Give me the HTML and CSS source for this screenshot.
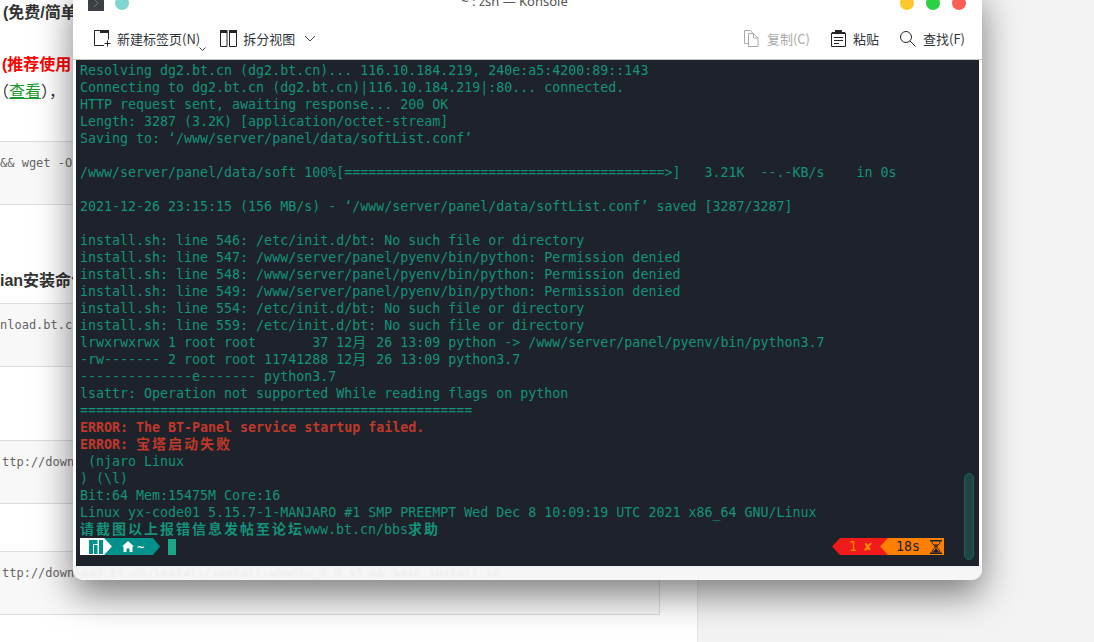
FILE: index.html
```html
<!DOCTYPE html>
<html lang="zh">
<head>
<meta charset="utf-8">
<title>Konsole</title>
<link rel="stylesheet" href="styles.css">
</head>
<body>
<div class="page">
  <main class="article">
    <p class="lead">(免费/简单的安装)</p>
    <p class="recommend">(推荐使用</p>
    <p class="note">（<a class="link" href="#">查看</a>），</p>
    <div class="code code-first">&amp;&amp; wget -O install.sh</div>
    <h3 class="heading">ian安装命令</h3>
    <div class="code code-second">nload.bt.cn/install/install-ubuntu_6.0.sh</div>
    <div class="code code-third">ttp://download.bt.cn/install/install_6.0.sh</div>
    <div class="code code-fourth">ttp://download.bt.cn/install/install-ubuntu_6.0.sh &amp;&amp; bash install.sh</div>
  </main>
  <aside class="sidebar"></aside>
</div>

<section class="window">
  <header class="titlebar">
    <div class="title-left">
      <span class="menu-btn">
        <svg class="menu-chevron" width="6" height="10" viewBox="0 0 6 10"><path d="M1 1l4 4-4 4" fill="none" stroke="#777" stroke-width="1"/></svg>
      </span>
      <span class="dot dot-teal"></span>
    </div>
    <div class="title">~ : zsh — Konsole</div>
    <div class="title-right">
      <span class="dot dot-yellow"></span>
      <span class="dot dot-green"></span>
      <span class="dot dot-red"></span>
    </div>
  </header>

  <nav class="toolbar">
    <div class="tool tool-new">
      <svg class="icon" width="17" height="17" viewBox="0 0 17 17"><path d="M10 15.500H.5V.5h14v9" fill="none" stroke="#232629"/><path d="M6 0h9v3H6z" fill="#232629"/><path d="M10.500 13.500h6M13.500 10.500v6" stroke="#232629" fill="none"/></svg>
      <span>新建标签页(N)</span>
      <svg class="mini-chevron" width="7" height="4" viewBox="0 0 7 4"><path d="M.5.5l3 3 3-3" fill="none" stroke="#444"/></svg>
    </div>
    <div class="tool tool-split">
      <svg class="icon" width="17" height="17" viewBox="0 0 17 17"><path d="M.5 2.500h6.500v14H.5zM9.500 2.500h7v14h-7z" fill="none" stroke="#232629"/><path d="M0 0h7.500v3H0zM9 0h8v3H9z" fill="#232629"/></svg>
      <span>拆分视图</span>
      <svg class="chevron" width="12" height="7" viewBox="0 0 12 7"><path d="M1 1l5 5 5-5" fill="none" stroke="#444"/></svg>
    </div>
    <div class="tool tool-copy">
      <svg class="icon" width="15" height="17" viewBox="0 0 15 17"><path d="M5 13.500H.5V.5h6l2.500 3" fill="none" stroke="#aaa"/><path d="M4.500 3.500h5l4.500 4.500v8.500H4.500z" fill="none" stroke="#aaa"/><path d="M9.500 3.500v4.500h4.500" fill="none" stroke="#aaa"/></svg>
      <span>复制(C)</span>
    </div>
    <div class="tool tool-paste">
      <svg class="icon" width="15" height="17" viewBox="0 0 15 17"><path d="M.5 3h14v13.500H.5z" fill="none" stroke="#232629"/><path d="M1 2h13v2H1zM4 0h7v3H4z" fill="#232629"/><path d="M3 7.500h9M3 10.500h9M3 13.500h5" stroke="#232629" fill="none"/></svg>
      <span>粘贴</span>
    </div>
    <div class="tool tool-find">
      <svg class="icon" width="16" height="16" viewBox="0 0 16 16"><circle cx="6" cy="6" r="5.500" fill="none" stroke="#232629"/><path d="M10 10l5.500 5.500" stroke="#232629" fill="none"/></svg>
      <span>查找(F)</span>
    </div>
  </nav>

  <div class="terminal">
    <div class="line">Resolving dg2.bt.cn (dg2.bt.cn)... 116.10.184.219, 240e:a5:4200:89::143</div>
    <div class="line">Connecting to dg2.bt.cn (dg2.bt.cn)|116.10.184.219|:80... connected.</div>
    <div class="line">HTTP request sent, awaiting response... 200 OK</div>
    <div class="line">Length: 3287 (3.2K) [application/octet-stream]</div>
    <div class="line">Saving to: ‘/www/server/panel/data/softList.conf’</div>
    <div class="line"></div>
    <div class="line">/www/server/panel/data/soft 100%[========================================&gt;]   3.21K  --.-KB/s    in 0s</div>
    <div class="line"></div>
    <div class="line">2021-12-26 23:15:15 (156 MB/s) - ‘/www/server/panel/data/softList.conf’ saved [3287/3287]</div>
    <div class="line"></div>
    <div class="line">install.sh: line 546: /etc/init.d/bt: No such file or directory</div>
    <div class="line">install.sh: line 547: /www/server/panel/pyenv/bin/python: Permission denied</div>
    <div class="line">install.sh: line 548: /www/server/panel/pyenv/bin/python: Permission denied</div>
    <div class="line">install.sh: line 549: /www/server/panel/pyenv/bin/python: Permission denied</div>
    <div class="line">install.sh: line 554: /etc/init.d/bt: No such file or directory</div>
    <div class="line">install.sh: line 559: /etc/init.d/bt: No such file or directory</div>
    <div class="line">lrwxrwxrwx 1 root root       37 12<span class="cjk">月</span> 26 13:09 python -&gt; /www/server/panel/pyenv/bin/python3.7</div>
    <div class="line">-rw------- 2 root root 11741288 12<span class="cjk">月</span> 26 13:09 python3.7</div>
    <div class="line">--------------e------- python3.7</div>
    <div class="line">lsattr: Operation not supported While reading flags on python</div>
    <div class="line">=================================================</div>
    <div class="line line-error">ERROR: The BT-Panel service startup failed.</div>
    <div class="line line-error">ERROR: <span class="cjk cjk-bold">宝塔启动失败</span></div>
    <div class="line"> (njaro Linux</div>
    <div class="line">) (\l)</div>
    <div class="line">Bit:64 Mem:15475M Core:16</div>
    <div class="line">Linux yx-code01 5.15.7-1-MANJARO #1 SMP PREEMPT Wed Dec 8 10:09:19 UTC 2021 x86_64 GNU/Linux</div>
    <div class="line"><span class="cjk cjk-bold">请截图以上报错信息发帖至论坛</span>www.bt.cn/bbs<span class="cjk cjk-bold">求助</span></div>
    <div class="prompt">
      <div class="seg-logo">
        <svg width="14" height="14" viewBox="0 0 14 14"><path d="M0 0h8.500v4H4v10H0zM5 5h3.500v9H5zM10 0h4v14h-4z" fill="#00918a"/></svg>
      </div>
      <div class="seg-home">
        <svg width="12" height="11" viewBox="0 0 12 11"><path d="M6 0l6 5.500h-1.500V11H7.500V7.500h-3V11H1.500V5.500H0z" fill="#fff"/></svg>
        <span class="tilde">~</span>
      </div>
      <span class="cursor"></span>
      <div class="status">
        <div class="seg-error"><span>1</span><span class="cross">✘</span></div>
        <div class="seg-time">
          <span>18s</span>
          <svg class="hourglass" width="12" height="14" viewBox="0 0 12 14"><path d="M0 0h12v1.500H0zM0 12.500h12V14H0z" fill="#1e222a"/><path d="M2 1.500C2 5 5 5.500 5.500 7 5 8.500 2 9 2 12.500M10 1.500C10 5 7 5.500 6.500 7 7 8.500 10 9 10 12.500" fill="none" stroke="#1e222a"/><path d="M3.500 4.500h5L6 7zM6 8l3.500 4.500h-7z" fill="#1e222a"/></svg>
        </div>
      </div>
    </div>
    <div class="scrollbar"></div>
  </div>
  <div class="window-foot"></div>
</section>
</body>
</html>
```

FILE: styles.css
```css
html, body {
  margin: 0;
  padding: 0;
  height: 100%;
  overflow: hidden;
  background: #fff;
}

.page {
  display: flex;
  height: 642px;
  font-family: "Liberation Sans", "Noto Sans CJK SC", sans-serif;
  color: #333;
}

.article {
  width: 697px;
  flex: none;
  background: #fff;
  border-right: 1px solid #e6e6e6;
  overflow: hidden;
}

.sidebar {
  flex: 1;
  background: #f3f3f3;
}

.lead, .recommend, .heading {
  margin: 0;
  font-size: 16px;
  font-weight: 700;
  white-space: nowrap;
  line-height: 22px;
}

.lead { padding: 2px 0 0 3px; }
.recommend { margin-top: 30px; padding-left: 2px; color: #f00; }

.note {
  margin: 3px 0 0 -7px;
  font-size: 16px;
  line-height: 22px;
  font-family: "Noto Sans CJK SC", sans-serif;
  white-space: nowrap;
}

.link { color: #1a9a2e; }

.code {
  box-sizing: border-box;
  width: 660px;
  height: 64px;
  padding: 13px 0 0 2px;
  background: #f8f8f8;
  border: 1px solid #ddd;
  border-left: 0;
  font-family: "DejaVu Sans Mono", monospace;
  font-size: 12px;
  line-height: 16px;
  color: #666;
  white-space: nowrap;
}

.code-first { margin-top: 40px; padding-left: 0; }
.heading { margin-top: 65px; }
.code-second { margin-top: 11px; padding-left: 0; }
.code-third { margin-top: 73px; }
.code-fourth { margin-top: 47px; }

.window {
  position: absolute;
  left: 73px;
  top: -12px;
  width: 909px;
  height: 592px;
  display: flex;
  flex-direction: column;
  border-radius: 0 0 10px 10px;
  box-shadow: 0 14px 36px rgba(0, 0, 0, 0.5);
  font-family: "Noto Sans CJK SC", "Noto Sans", sans-serif;
}

.titlebar {
  flex: none;
  height: 30px;
  display: flex;
  align-items: center;
  background: #fff;
  padding: 0 16px 0 15px;
}

.title-left, .title-right {
  display: flex;
  align-items: center;
}

.title-left { gap: 11px; }
.title-right { gap: 12px; }

.title {
  flex: 1;
  padding-bottom: 4px;
  text-align: center;
  font-size: 13px;
  color: #555;
  font-family: "Noto Sans", sans-serif;
}

.menu-btn {
  width: 16px;
  height: 16px;
  background: #3a4045;
  display: flex;
  align-items: center;
  justify-content: center;
}

.dot {
  width: 14px;
  height: 14px;
  border-radius: 50%;
}

.dot-teal { background: #7fd6cc; }
.dot-yellow { background: #fdc72e; }
.dot-green { background: #2ad143; }
.dot-red { background: #fd5f57; }

.toolbar {
  flex: none;
  height: 42px;
  display: flex;
  align-items: center;
  background: #fff;
  padding: 0 0 0 21px;
  box-sizing: border-box;
  border-bottom: 1px solid #c8c8c8;
  font-size: 13px;
  color: #31363b;
}

.tool {
  display: flex;
  align-items: center;
  gap: 7px;
  position: relative;
  white-space: nowrap;
}

.tool-new span { margin-left: -1px; }
.tool-split { margin-left: 20px; gap: 6px; }
.tool-copy { margin-left: auto; color: #a8a8a8; gap: 8px; }
.tool-paste { margin-left: 21px; gap: 7px; }
.tool-find { margin-left: 21px; margin-right: 17px; gap: 7px; }

.mini-chevron {
  position: absolute;
  right: -6px;
  bottom: -3px;
}

.chevron { margin-left: 3px; }

.terminal {
  position: relative;
  flex: 1;
  min-height: 0;
  padding: 2px 0 0 4px;
  background: #1e222a;
  border-left: 3px solid #fff;
  border-right: 3px solid #fff;
  font-family: "DejaVu Sans Mono", monospace;
  font-size: 13.3px;
  color: #13937b;
}

.line {
  height: 17px;
  line-height: 17px;
  white-space: pre;
}

.line-error {
  color: #c0392b;
  font-weight: 700;
}

.cjk {
  font-family: "Noto Sans CJK SC", sans-serif;
  font-size: 14px;
  letter-spacing: 2px;
  line-height: 1;
}

.cjk-bold { font-weight: 700; }

.prompt {
  display: flex;
  align-items: center;
  height: 17px;
  padding-right: 35px;
}

.seg-logo {
  width: 32px;
  height: 17px;
  box-sizing: border-box;
  padding-left: 9px;
  display: flex;
  align-items: center;
  background: #fff;
  clip-path: polygon(0 0, 24px 0, 100% 50%, 24px 100%, 0 100%);
  position: relative;
  z-index: 1;
}

.seg-home {
  width: 56px;
  height: 17px;
  margin-left: -8px;
  box-sizing: border-box;
  padding-left: 18px;
  display: flex;
  align-items: center;
  gap: 3px;
  background: #00918a;
  clip-path: polygon(0 0, 49px 0, 100% 50%, 49px 100%, 0 100%);
}

.tilde {
  color: #fff;
  font-weight: 700;
  font-size: 12px;
}

.cursor {
  width: 8px;
  height: 16px;
  margin-left: 8px;
  background: #1aa586;
}

.status {
  margin-left: auto;
  display: flex;
}

.seg-error {
  width: 56px;
  height: 17px;
  box-sizing: border-box;
  padding-left: 17px;
  display: flex;
  gap: 7px;
  align-items: center;
  background: #f11a1a;
  color: #ff8c00;
  clip-path: polygon(8px 0, 100% 0, 100% 100%, 8px 100%, 0 50%);
}

.cross { font-weight: 700; }

.seg-time {
  width: 64px;
  height: 17px;
  margin-left: -8px;
  box-sizing: border-box;
  padding-left: 16px;
  display: flex;
  align-items: center;
  gap: 10px;
  background: #ff7f00;
  color: #1e222a;
  clip-path: polygon(8px 0, 100% 0, 100% 100%, 8px 100%, 0 50%);
}

.hourglass { flex: none; }

.scrollbar {
  position: absolute;
  right: 5px;
  top: 413px;
  width: 8px;
  height: 85px;
  border: 1px solid #1a5f55;
  border-radius: 5px;
  background: #1f4441;
}

.window-foot {
  flex: none;
  height: 14px;
  background: rgba(245, 245, 245, 0.93);
  backdrop-filter: blur(1px);
  border-radius: 0 0 10px 10px;
}
```
